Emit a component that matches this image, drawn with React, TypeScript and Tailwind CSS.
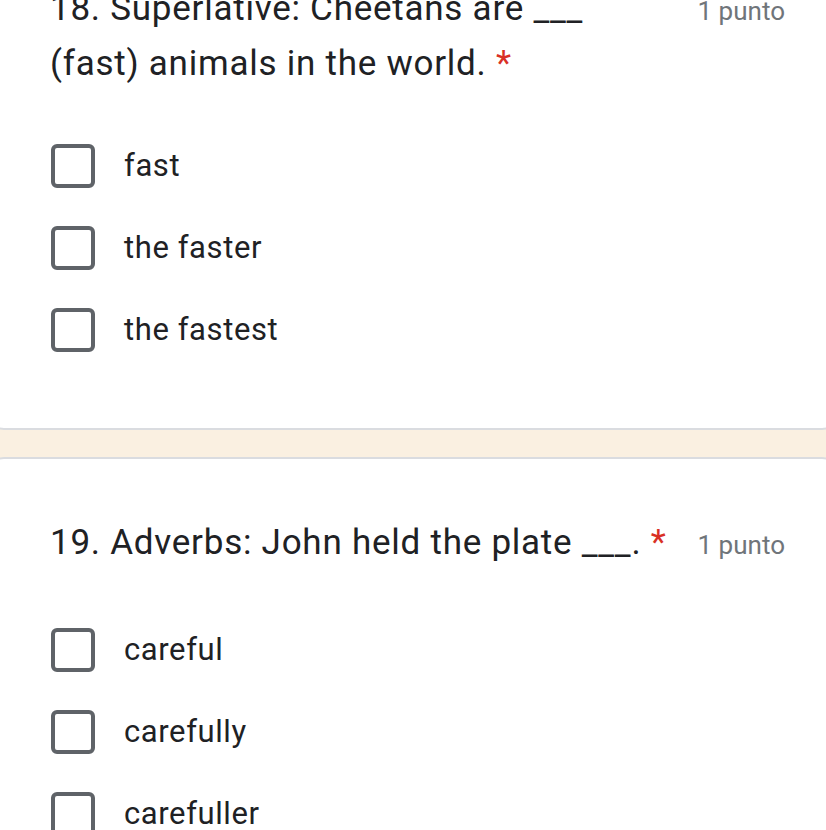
import React from "react";

const font = { fontFamily: "Roboto, 'Liberation Sans', Arial, sans-serif" };

function Option({ label }: { label: string }) {
  return (
    <div className="flex items-center h-[44px]">
      <div className="ml-[1px] w-[44px] h-[44px] shrink-0 rounded-[6px] border-[4px] border-[#5f6368] bg-white" />
      <span className="ml-[29px] text-[31px] leading-[44px] tracking-[0.6px] text-[#202124]">
        {label}
      </span>
    </div>
  );
}

function Title({ children }: { children: React.ReactNode }) {
  return (
    <div className="flex items-start">
      <div className="flex-1 text-[35px] leading-[55px] tracking-[0.75px] text-[#202124]">{children}</div>
      <div className="ml-[20px] mt-[15px] text-[26px] leading-[30px] text-[#70757a] whitespace-nowrap">
        1 punto
      </div>
    </div>
  );
}

export default function App() {
  return (
    <div className="w-[826px] h-[830px] overflow-hidden bg-[#faf0e1]" style={font}>
      <div className="-mx-[14px]">
        <div className="-mt-[19px] bg-white rounded-b-[18px] border-b-[2px] border-[#dadce0] pl-[64px] pr-[55px] pb-[76px]">
          <Title>
            18. Superlative: Cheetans are ___
            <br />
            (fast) animals in the world. <span className="text-[#d93025]">*</span>
          </Title>
          <div className="mt-[53px] flex flex-col gap-[38px]">
            <Option label="fast" />
            <Option label="the faster" />
            <Option label="the fastest" />
          </div>
        </div>
        <div className="h-[27px]" />
        <div className="bg-white rounded-t-[18px] border-t-[2px] border-[#dadce0] pl-[64px] pr-[55px] pt-[56px] pb-[80px]">
          <Title>
            19. Adverbs: John held the plate ___. <span className="text-[#d93025]">*</span>
          </Title>
          <div className="mt-[58px] flex flex-col gap-[38px]">
            <Option label="careful" />
            <Option label="carefully" />
            <Option label="carefuller" />
          </div>
        </div>
      </div>
    </div>
  );
}
